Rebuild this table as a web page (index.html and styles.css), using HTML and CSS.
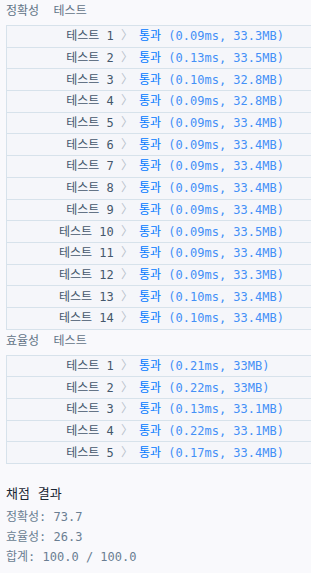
FILE: index.html
```html
<!DOCTYPE html>
<html lang="ko">
<head>
<meta charset="utf-8">
<link rel="stylesheet" href="styles.css">
</head>
<body>
<div class="page">
  <div class="section-title">정확성  테스트</div>
  <table class="results">
    <tr><td class="num">테스트 1 <span class="chev">〉</span></td><td class="res"><span class="pass">통과</span> <span class="detail">(0.09ms, 33.3MB)</span></td></tr>
    <tr><td class="num">테스트 2 <span class="chev">〉</span></td><td class="res"><span class="pass">통과</span> <span class="detail">(0.13ms, 33.5MB)</span></td></tr>
    <tr><td class="num">테스트 3 <span class="chev">〉</span></td><td class="res"><span class="pass">통과</span> <span class="detail">(0.10ms, 32.8MB)</span></td></tr>
    <tr><td class="num">테스트 4 <span class="chev">〉</span></td><td class="res"><span class="pass">통과</span> <span class="detail">(0.09ms, 32.8MB)</span></td></tr>
    <tr><td class="num">테스트 5 <span class="chev">〉</span></td><td class="res"><span class="pass">통과</span> <span class="detail">(0.09ms, 33.4MB)</span></td></tr>
    <tr><td class="num">테스트 6 <span class="chev">〉</span></td><td class="res"><span class="pass">통과</span> <span class="detail">(0.09ms, 33.4MB)</span></td></tr>
    <tr><td class="num">테스트 7 <span class="chev">〉</span></td><td class="res"><span class="pass">통과</span> <span class="detail">(0.09ms, 33.4MB)</span></td></tr>
    <tr><td class="num">테스트 8 <span class="chev">〉</span></td><td class="res"><span class="pass">통과</span> <span class="detail">(0.09ms, 33.4MB)</span></td></tr>
    <tr><td class="num">테스트 9 <span class="chev">〉</span></td><td class="res"><span class="pass">통과</span> <span class="detail">(0.09ms, 33.4MB)</span></td></tr>
    <tr><td class="num">테스트 10 <span class="chev">〉</span></td><td class="res"><span class="pass">통과</span> <span class="detail">(0.09ms, 33.5MB)</span></td></tr>
    <tr><td class="num">테스트 11 <span class="chev">〉</span></td><td class="res"><span class="pass">통과</span> <span class="detail">(0.09ms, 33.4MB)</span></td></tr>
    <tr><td class="num">테스트 12 <span class="chev">〉</span></td><td class="res"><span class="pass">통과</span> <span class="detail">(0.09ms, 33.3MB)</span></td></tr>
    <tr><td class="num">테스트 13 <span class="chev">〉</span></td><td class="res"><span class="pass">통과</span> <span class="detail">(0.10ms, 33.4MB)</span></td></tr>
    <tr><td class="num">테스트 14 <span class="chev">〉</span></td><td class="res"><span class="pass">통과</span> <span class="detail">(0.10ms, 33.4MB)</span></td></tr>
  </table>
  <div class="section-title">효율성  테스트</div>
  <table class="results">
    <tr><td class="num">테스트 1 <span class="chev">〉</span></td><td class="res"><span class="pass">통과</span> <span class="detail">(0.21ms, 33MB)</span></td></tr>
    <tr><td class="num">테스트 2 <span class="chev">〉</span></td><td class="res"><span class="pass">통과</span> <span class="detail">(0.22ms, 33MB)</span></td></tr>
    <tr><td class="num">테스트 3 <span class="chev">〉</span></td><td class="res"><span class="pass">통과</span> <span class="detail">(0.13ms, 33.1MB)</span></td></tr>
    <tr><td class="num">테스트 4 <span class="chev">〉</span></td><td class="res"><span class="pass">통과</span> <span class="detail">(0.22ms, 33.1MB)</span></td></tr>
    <tr><td class="num">테스트 5 <span class="chev">〉</span></td><td class="res"><span class="pass">통과</span> <span class="detail">(0.17ms, 33.4MB)</span></td></tr>
  </table>
  <div class="summary">
    <div class="summary-title">채점 결과</div>
    <div class="summary-line">정확성: 73.7</div>
    <div class="summary-line">효율성: 26.3</div>
    <div class="summary-line">합계: 100.0 / 100.0</div>
  </div>
</div>
</body>
</html>
```
FILE: styles.css
```css
html, body {
  margin: 0;
  padding: 0;
  background: #f9f9fc;
}
body {
  font-family: "DejaVu Sans Mono", "Noto Sans CJK KR", monospace;
  font-size: 12px;
  overflow: hidden;
}
.page {
  padding-left: 6px;
}
.section-title {
  height: 25px;
  box-sizing: border-box;
  padding-top: 2px;
  line-height: 18px;
  color: #627487;
  white-space: pre;
}
.results {
  width: 100%;
  border-collapse: collapse;
  background: #f5f6fa;
  border-top: 1px solid #d7e2eb;
  border-left: 1px solid #d7e2eb;
}
.results tr {
  height: 21.7px;
  border-bottom: 1px solid #d7e2eb;
}
.results td {
  padding: 0;
  vertical-align: middle;
  line-height: 18px;
  white-space: pre;
}
.num {
  width: 126px;
  text-align: right;
  color: #44576c;
}
.chev {
  color: #b9c2cc;
}
.res {
  padding-left: 6px !important;
}
.pass {
  color: #0078ff;
}
.detail {
  color: #4490f7;
}
.summary {
  padding-top: 19px;
}
.summary-title {
  font-size: 13px;
  line-height: 22px;
  color: #1a2633;
  margin-bottom: 2px;
}
.summary-line {
  line-height: 20px;
  color: #6a7e92;
}
```
